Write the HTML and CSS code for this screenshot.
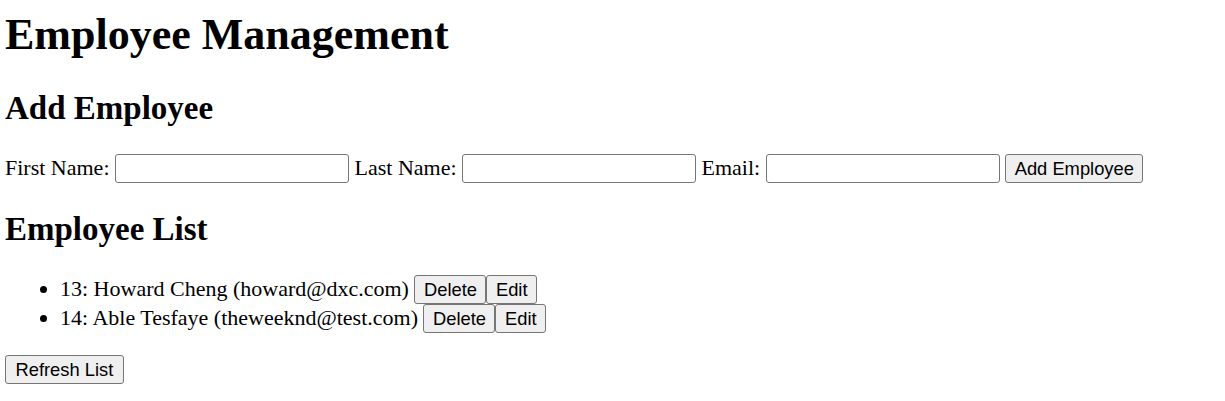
FILE: index.html
```html
<!DOCTYPE html>
<html>
<head>
<meta charset="utf-8">
<title>Employee Management</title>
<link rel="stylesheet" href="styles.css">
</head>
<body>
<h1 class="title">Employee Management</h1>
<h2 class="section">Add Employee</h2>
<div class="form">First Name: <input class="field" type="text"> Last Name: <input class="field" type="text"> Email: <input class="field" type="text"> <button class="btn">Add Employee</button></div>
<h2 class="section">Employee List</h2>
<ul class="list">
<li class="item">13: Howard Cheng (howard@dxc.com) <button class="btn">Delete</button><button class="btn">Edit</button></li>
<li class="item">14: Able Tesfaye (theweeknd@test.com) <button class="btn">Delete</button><button class="btn">Edit</button></li>
</ul>
<button class="btn btn-wide">Refresh List</button>
</body>
</html>
```
FILE: styles.css
```css
body {
  margin: 0 5px;
  padding-top: 9px;
  font-family: "Liberation Serif", "Times New Roman", serif;
  font-size: 22px;
  color: #000;
  background: #fff;
}
.title {
  font-size: 44px;
  font-weight: bold;
  margin: 0 0 29.5px;
}
.section {
  font-size: 33px;
  font-weight: bold;
  margin: 27.4px 0;
}
.form {
  margin: 0;
}
.field {
  box-sizing: border-box;
  width: 234px;
  height: 29px;
  padding: 1px 3px;
  border: 1px solid #767676;
  border-radius: 3px;
  font-family: "Liberation Sans", Arial, sans-serif;
  font-size: 18.33px;
  background: #fff;
  vertical-align: baseline;
}
.btn {
  box-sizing: border-box;
  height: 29px;
  padding: 0 8.5px;
  border: 1px solid #767676;
  border-radius: 3px;
  background: #efefef;
  color: #000;
  font-family: "Liberation Sans", Arial, sans-serif;
  font-size: 18.33px;
  line-height: 27px;
  margin: 0;
}
.btn-wide {
  padding: 0 9.5px;
}
.list {
  margin: 22px 0;
  padding-left: 55px;
}
.item {
  line-height: 25px;
}
```
